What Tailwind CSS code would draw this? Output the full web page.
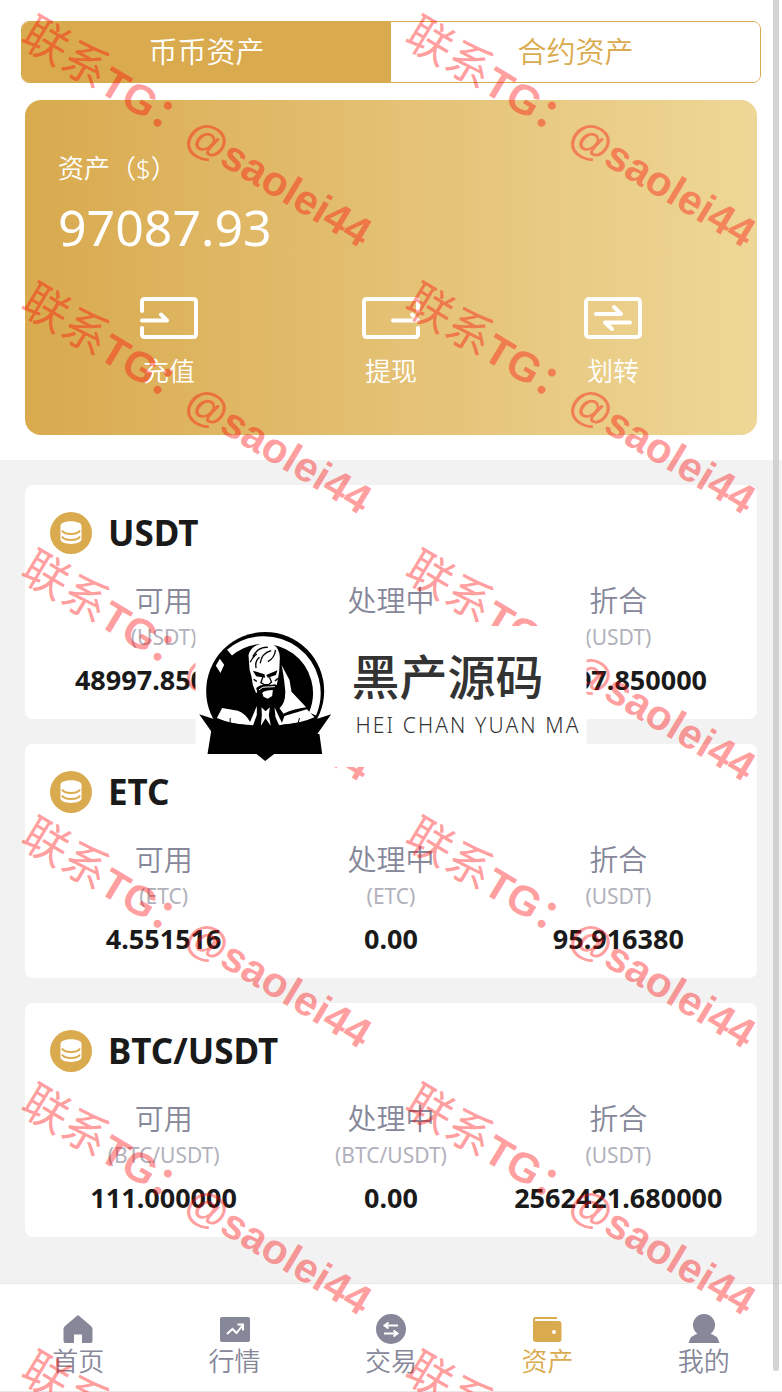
<!DOCTYPE html>
<html lang="zh-CN">
<head>
    <meta charset="UTF-8">
    <meta name="viewport" content="width=device-width, initial-scale=1.0">
    <title>资产</title>
    <script src="https://cdn.jsdelivr.net/npm/@tailwindcss/browser@4"></script>
</head>
<body class="relative min-h-screen flex flex-col overflow-x-hidden bg-white font-['Noto_Sans','Noto_Sans_CJK_SC',sans-serif] text-[#1a1a1a]">
    <!-- Shared icon shapes -->
    <svg class="hidden">
        <symbol id="coin" viewBox="0 0 42 42">
            <circle cx="21" cy="21" r="21" fill="#daab4e"/>
            <path fill="#fff" d="M10.500 14c0-6.200 21-6.200 21 0v13c0 6.500-21 6.500-21 0z"/>
            <path fill="none" stroke="#daab4e" stroke-width="2" d="M12 18.500c2.500 4.500 15.500 4.500 18 0M12 24.500c2.500 4.500 15.500 4.500 18 0"/>
        </symbol>
    </svg>

    <!-- Account tabs -->
    <header class="px-[21px] pt-[21px]">
        <div class="flex h-[62px] overflow-hidden rounded-lg border border-[#daab4e] text-[29px] font-[350]">
            <button type="button" class="flex-1 bg-[#daab4e] text-white">币币资产</button>
            <button type="button" class="flex-1 bg-white text-[#daab4e]">合约资产</button>
        </div>
    </header>

    <!-- Balance card -->
    <section class="px-[25px] pt-[17px] pb-[25px]">
        <div class="rounded-2xl bg-linear-to-r from-[#d9aa4e] to-[#eed796] px-[33px] pt-12 pb-[46px] text-white">
            <p class="text-[26px] leading-10 font-[350]">资产（$）</p>
            <p class="text-[50px] leading-[78px]">97087.93</p>
            <div class="mt-[31px] grid grid-cols-3 text-[26px] leading-9 font-[350]">
                <a href="#" class="flex flex-col items-center gap-[14px]">
                    <svg class="h-[42px] w-[60px]" viewBox="0 0 60 42" fill="none" stroke="#fff" stroke-width="4" stroke-linecap="round" stroke-linejoin="round">
                        <path d="M3 14V5q0-3 3-3h48q3 0 3 3v32q0 3-3 3H6q-3 0-3-3v-6M3 23.500h25l-6-6"/>
                    </svg>
                    <span>充值</span>
                </a>
                <a href="#" class="flex flex-col items-center gap-[14px]">
                    <svg class="h-[42px] w-[60px]" viewBox="0 0 60 42" fill="none" stroke="#fff" stroke-width="4" stroke-linecap="round" stroke-linejoin="round">
                        <path d="M57 14V5q0-3-3-3H6Q3 2 3 5v32q0 3 3 3h48q3 0 3-3v-6M32 23.500h25l-6-6"/>
                    </svg>
                    <span>提现</span>
                </a>
                <a href="#" class="flex flex-col items-center gap-[14px]">
                    <svg class="h-[42px] w-[60px]" viewBox="0 0 60 42" fill="none" stroke="#fff" stroke-width="4" stroke-linecap="round" stroke-linejoin="round">
                        <rect x="3" y="2" width="54" height="38" rx="3"/>
                        <path d="M13 17h25l-7-7M47 25.500H22l7 6.500"/>
                    </svg>
                    <span>划转</span>
                </a>
            </div>
        </div>
    </section>

    <!-- Coin list -->
    <main class="flex flex-1 flex-col gap-[25px] bg-[#f2f2f2] px-[25px] pt-[25px] pb-[46px]">
        <section class="rounded-lg bg-white px-[25px] pt-6 pb-5">
            <div class="flex items-center gap-4">
                <svg class="size-[42px]"><use href="#coin"/></svg>
                <h2 class="text-[35px] leading-[48px] font-bold">USDT</h2>
            </div>
            <div class="mt-6 grid grid-cols-3 text-center">
                <div>
                    <p class="text-[29px] leading-10 font-[350] text-[#868799]">可用</p>
                    <p class="text-[21px] leading-8 text-[#b1b1bc]">(USDT)</p>
                    <p class="mt-2 text-[27px] leading-[38px] font-bold">48997.850000</p>
                </div>
                <div>
                    <p class="text-[29px] leading-10 font-[350] text-[#868799]">处理中</p>
                    <p class="text-[21px] leading-8 text-[#b1b1bc]">(USDT)</p>
                    <p class="mt-2 text-[27px] leading-[38px] font-bold">0.00</p>
                </div>
                <div>
                    <p class="text-[29px] leading-10 font-[350] text-[#868799]">折合</p>
                    <p class="text-[21px] leading-8 text-[#b1b1bc]">(USDT)</p>
                    <p class="mt-2 text-[27px] leading-[38px] font-bold">48997.850000</p>
                </div>
            </div>
        </section>

        <section class="rounded-lg bg-white px-[25px] pt-6 pb-5">
            <div class="flex items-center gap-4">
                <svg class="size-[42px]"><use href="#coin"/></svg>
                <h2 class="text-[35px] leading-[48px] font-bold">ETC</h2>
            </div>
            <div class="mt-6 grid grid-cols-3 text-center">
                <div>
                    <p class="text-[29px] leading-10 font-[350] text-[#868799]">可用</p>
                    <p class="text-[21px] leading-8 text-[#b1b1bc]">(ETC)</p>
                    <p class="mt-2 text-[27px] leading-[38px] font-bold">4.551516</p>
                </div>
                <div>
                    <p class="text-[29px] leading-10 font-[350] text-[#868799]">处理中</p>
                    <p class="text-[21px] leading-8 text-[#b1b1bc]">(ETC)</p>
                    <p class="mt-2 text-[27px] leading-[38px] font-bold">0.00</p>
                </div>
                <div>
                    <p class="text-[29px] leading-10 font-[350] text-[#868799]">折合</p>
                    <p class="text-[21px] leading-8 text-[#b1b1bc]">(USDT)</p>
                    <p class="mt-2 text-[27px] leading-[38px] font-bold">95.916380</p>
                </div>
            </div>
        </section>

        <section class="rounded-lg bg-white px-[25px] pt-6 pb-5">
            <div class="flex items-center gap-4">
                <svg class="size-[42px]"><use href="#coin"/></svg>
                <h2 class="text-[35px] leading-[48px] font-bold">BTC/USDT</h2>
            </div>
            <div class="mt-6 grid grid-cols-3 text-center">
                <div>
                    <p class="text-[29px] leading-10 font-[350] text-[#868799]">可用</p>
                    <p class="text-[21px] leading-8 text-[#b1b1bc]">(BTC/USDT)</p>
                    <p class="mt-2 text-[27px] leading-[38px] font-bold">111.000000</p>
                </div>
                <div>
                    <p class="text-[29px] leading-10 font-[350] text-[#868799]">处理中</p>
                    <p class="text-[21px] leading-8 text-[#b1b1bc]">(BTC/USDT)</p>
                    <p class="mt-2 text-[27px] leading-[38px] font-bold">0.00</p>
                </div>
                <div>
                    <p class="text-[29px] leading-10 font-[350] text-[#868799]">折合</p>
                    <p class="text-[21px] leading-8 text-[#b1b1bc]">(USDT)</p>
                    <p class="mt-2 text-[27px] leading-[38px] font-bold">2562421.680000</p>
                </div>
            </div>
        </section>
    </main>

    <!-- Bottom navigation -->
    <nav class="grid grid-cols-5 border-y border-[#e8e8e8] bg-white pt-[30px] pb-[15px] text-[26px] leading-[30px] font-[350] text-[#868799]">
        <a href="#" class="flex flex-col items-center">
            <svg class="size-8" viewBox="0 0 32 32" fill="currentColor"><path d="M16 1 29 12q1.500 1.500 1.500 3v12q0 2-2 2H20v-8.500h-8V29H3.500q-2 0-2-2V15q0-1.500 1.500-3z"/></svg>
            <span>首页</span>
        </a>
        <a href="#" class="flex flex-col items-center">
            <svg class="size-8" viewBox="0 0 32 32"><rect x="1" y="3" width="30" height="25" rx="2" fill="currentColor"/><path d="m8 20 5.500-5 4 4 6-7.500M18.500 10.500h5.500v6" fill="none" stroke="#fff" stroke-width="2"/></svg>
            <span>行情</span>
        </a>
        <a href="#" class="flex flex-col items-center">
            <svg class="size-8" viewBox="0 0 32 32"><circle cx="16" cy="15" r="15" fill="currentColor"/><path d="M23 11.500H10m3.500-3-4 3 4 3M9 19.500h13m-3.500-3 4 3-4 3" fill="none" stroke="#fff" stroke-width="2"/></svg>
            <span>交易</span>
        </a>
        <a href="#" class="flex flex-col items-center text-[#daab4e]">
            <svg class="size-8" viewBox="0 0 32 32"><path d="M26 3H4.500Q2 3 2 5.500V25q0 3 3 3h22.500q3 0 3-3V10q0-3-3-3H4V5h22z" fill="currentColor"/><circle cx="23" cy="18" r="2" fill="#fff"/></svg>
            <span>资产</span>
        </a>
        <a href="#" class="flex flex-col items-center">
            <svg class="size-8" viewBox="0 0 32 32" fill="currentColor"><circle cx="16" cy="11" r="11"/><path d="M.500 29Q2 21 12 19h8q10 2 11.500 10z"/></svg>
            <span>我的</span>
        </a>
    </nav>

    <!-- Repeated contact watermark -->
    <svg class="pointer-events-none absolute inset-0 size-full overflow-hidden font-['Liberation_Sans','Noto_Sans_CJK_SC',sans-serif] text-[42px] font-bold" fill="#ff0000" fill-opacity="0.4">
        <text transform="translate(18 43) rotate(31)"><tspan font-weight="400" font-size="46">联系</tspan>TG：@saolei44</text>
        <text transform="translate(402 43) rotate(31)"><tspan font-weight="400" font-size="46">联系</tspan>TG：@saolei44</text>
        <text transform="translate(18 310) rotate(31)"><tspan font-weight="400" font-size="46">联系</tspan>TG：@saolei44</text>
        <text transform="translate(402 310) rotate(31)"><tspan font-weight="400" font-size="46">联系</tspan>TG：@saolei44</text>
        <text transform="translate(18 577) rotate(31)"><tspan font-weight="400" font-size="46">联系</tspan>TG：@saolei44</text>
        <text transform="translate(402 577) rotate(31)"><tspan font-weight="400" font-size="46">联系</tspan>TG：@saolei44</text>
        <text transform="translate(18 844) rotate(31)"><tspan font-weight="400" font-size="46">联系</tspan>TG：@saolei44</text>
        <text transform="translate(402 844) rotate(31)"><tspan font-weight="400" font-size="46">联系</tspan>TG：@saolei44</text>
        <text transform="translate(18 1111) rotate(31)"><tspan font-weight="400" font-size="46">联系</tspan>TG：@saolei44</text>
        <text transform="translate(402 1111) rotate(31)"><tspan font-weight="400" font-size="46">联系</tspan>TG：@saolei44</text>
        <text transform="translate(18 1378) rotate(31)"><tspan font-weight="400" font-size="46">联系</tspan>TG：@saolei44</text>
        <text transform="translate(402 1378) rotate(31)"><tspan font-weight="400" font-size="46">联系</tspan>TG：@saolei44</text>
    </svg>

    <!-- Brand overlay -->
    <div class="absolute top-[626px] left-1/2 flex h-[141px] w-[391px] -translate-x-1/2 items-center bg-white text-[#333]">
        <svg class="h-[141px] w-[140px] shrink-0" viewBox="-12 -12 420 423">
            <circle cx="197" cy="183" r="177"/>
            <path d="M90 68A159 159 0 0 1 339 252" fill="none" stroke="#fff" stroke-width="23"/>
            <path fill="#fff" d="m61 86 13 18-11 25-14-22z"/>
            <!-- Hair and face -->
            <path fill="#fff" d="M147 75Q155 42 203 38L213 26 219 42Q241 55 241 85L239 125 232 165 220 168Q205 160 185 170L170 190 160 165 156 140 150 118Z"/>
            <path fill="none" stroke="#000" stroke-width="4" d="M160 80Q175 50 205 52M152 97Q160 80 172 72M182 100Q186 70 215 62M170 114Q165 95 180 82M205 95Q225 85 228 60M190 142l-6 16 10 6h14l8-8-6-14M162 148l10 6M236 145l-10 8"/>
            <path d="M160 122 195 133 197 143 170 139ZM200 135 234 121 229 135 205 143ZM170 174Q185 160 205 166L228 163 236 172 228 200Q215 222 195 215L178 205Z"/>
            <path fill="none" stroke="#fff" stroke-width="3" d="M178 180Q190 168 202 171L226 170"/>
            <path fill="#fff" d="M188 188Q198 180 220 180L218 198 205 206 192 200Z"/>
            <!-- Jacket, collar and tie -->
            <path fill="#fff" d="M246 105 270 150 276 185 320 232Q285 236 252 251L240 235Q262 215 256 170 252 130 246 105ZM322 238 345 262Q300 282 245 284L255 258ZM52 264 68 234 115 242Q138 250 152 276L147 286Q95 282 52 264ZM172 228 148 284 160 288 172 255ZM225 232 250 284 240 288 228 262ZM186 232 198 244 211 232 208 256 214 288 198 265 184 288 187 256Z"/>
            <path fill="none" stroke="#000" stroke-width="3" d="M92 264v14M300 264l-4 14"/>
            <path d="m-1 253 53 17q144 34 290 0l53-17-41 58 6 2 8 59H224l-27 21-26-21H24l11-68z"/>
        </svg>
        <div class="ml-4 flex flex-col pb-1">
            <span class="text-5xl leading-[60px] font-medium">黑产源码</span>
            <span class="pl-1 text-[21px] leading-9 font-light tracking-widest whitespace-nowrap">HEI CHAN YUAN MA</span>
        </div>
    </div>

    <!-- Scroll indicator -->
    <div class="absolute top-0 right-[3px] h-[1371px] w-1.5 rounded-b-full bg-[#c8c8c8]/80"></div>
</body>
</html>
